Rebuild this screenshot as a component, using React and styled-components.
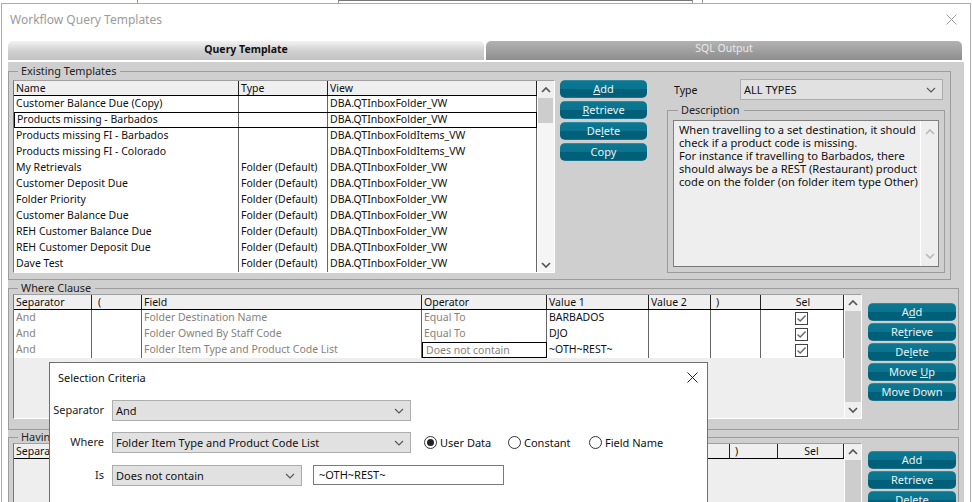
import React from "react";
import styled, { createGlobalStyle } from "styled-components";

const Global = createGlobalStyle`
  html, body { margin: 0; padding: 0; background: #fff; }
  body { font-family: "Noto Sans", "Liberation Sans", sans-serif; font-size: 10.5px; color: #111; }
  * { box-sizing: border-box; }
`;

const Screen = styled.div`
  position: relative;
  width: 972px;
  height: 502px;
  overflow: hidden;
  background: #fff;
`;
const BackStrip = styled.div`
  display: flex;
  height: 3px;
  background: #fff;
`;
const BackPane = styled.div`
  width: ${p => p.$w}px;
  margin-left: ${p => p.$ml || 0}px;
  border-right: ${p => (p.$right ? "1px solid #999" : "none")};
  border-top: ${p => (p.$top ? "1px solid #777" : "none")};
  border-left: ${p => (p.$left ? "1px solid #999" : "none")};
`;
const Win = styled.div`
  margin-left: 1px;
  width: 970px;
  height: 499px;
  border: 1px solid #acacac;
  border-bottom: none;
  padding: 0 0 0 6px;
  overflow: hidden;
`;
const TitleBar = styled.div`
  height: 37px;
  display: flex;
  align-items: center;
  justify-content: space-between;
  padding: 0 13px 7px 2px;
`;
const WinTitle = styled.div`
  font-size: 12px;
  color: #9b9b9b;
`;
const Tabs = styled.div`
  display: flex;
  gap: 2px;
  height: 19px;
`;
const Tab = styled.div`
  width: 476px;
  border-radius: 5px 5px 0 0;
  display: flex;
  align-items: center;
  justify-content: center;
  padding-bottom: ${p => (p.$active ? 4 : 6)}px;
  background: ${p => (p.$active ? "linear-gradient(#f2f2f2, #cfcfcf 55%, #c2c2c2)" : "linear-gradient(#b2b2b2, #a0a0a0 50%, #8d8d8d)")};
  color: ${p => (p.$active ? "#111" : "#e9e9e9")};
  font-weight: ${p => (p.$active ? 700 : 400)};
`;
const Panel = styled.div`
  margin-top: 2px;
  width: 956px;
  height: 441px;
  background: #cfcfcf;
  padding-top: 2px;
  overflow: hidden;
`;
const Group = styled.fieldset`
  margin: 0 0 ${p => p.$mb || 0}px 0;
  padding: ${p => p.$pt}px 0 0 4px;
  width: ${p => p.$w}px;
  height: ${p => p.$h}px;
  border: 1px solid #9c9c9c;
  min-inline-size: 0;
`;
const GroupTitle = styled.legend`
  margin-left: 5px;
  padding: 0 4px 0 3px;
  line-height: 14px;
  font-size: 10.9px;
  color: #222;
`;
const GroupRow = styled.div`
  display: flex;
  align-items: flex-start;
  margin-top: ${p => p.$mt || 0}px;
`;
const GridShell = styled.div`
  display: flex;
  width: ${p => p.$w}px;
  height: ${p => p.$h}px;
  flex: none;
  border-left: 1px solid #777;
  border-top: 1px solid #a0a0a0;
  background: ${p => p.$bg || "#fff"};
  border-bottom: 1px solid #fff;
  border-right: 1px solid #fff;
`;
const GridBody = styled.div`
  flex: 1;
  min-width: 0;
  overflow: hidden;
`;
const GridRow = styled.div`
  display: grid;
  grid-template-columns: ${p => p.$cols};
  height: ${p => p.$h || 16}px;
  background: ${p => (p.$head ? "#efefef" : "#fff")};
  border-bottom: ${p => (p.$head ? "1px solid #000" : "none")};
  position: relative;
`;
const Cell = styled.div`
  border-right: 1px solid ${p => (p.$head ? "#222" : "#666")};
  padding-left: ${p => p.$pl || 2}px;
  line-height: ${p => (p.$head ? 14 : 15)}px;
  white-space: nowrap;
  overflow: hidden;
  color: ${p => (p.$dim ? "#8a8178" : "#111")};
  text-align: ${p => (p.$center ? "center" : "left")};
  display: ${p => (p.$check ? "flex" : "block")};
  justify-content: ${p => (p.$check ? "center" : "normal")};
  padding-right: ${p => (p.$check ? "3px" : "0")};
  align-items: center;
`;
const OutlinedCell = styled(Cell)`
  border: 1px solid #000;
  line-height: 14px;
  padding-left: 3px;
  color: #8a8178;
`;
const SelectedRow = styled.div`
  position: absolute;
  inset: 0 0 0 0;
  border: 1px solid #000;
  pointer-events: none;
`;
const SelectedName = styled(Cell)`
  padding-left: 3px;
`;
const Scroll = styled.div`
  width: ${p => p.$w || 17}px;
  flex: none;
  display: flex;
  flex-direction: column;
  background: ${p => p.$track};
  border-left: 1px solid #fff;
`;
const ScrollBtn = styled.div`
  height: ${p => p.$h || 16}px;
  flex: none;
  display: flex;
  align-items: center;
  justify-content: center;
  background: ${p => p.$bg || "#efefef"};
`;
const Thumb = styled.div`
  height: 25px;
  flex: none;
  background: #cdcdcd;
  margin: 0 1px 0 0;
`;
const ScrollFill = styled.div`
  flex: 1;
`;
const BtnCol = styled.div`
  flex: none;
  display: flex;
  flex-direction: column;
  width: ${p => p.$w}px;
  margin-left: ${p => p.$ml}px;
  margin-top: ${p => p.$mt || 0}px;
  gap: ${p => p.$gap}px;
`;
const Btn = styled.div`
  height: 18px;
  border-radius: 5px;
  background: linear-gradient(#3d93aa 0, #0c7791 1.5px, #0a7490 50%, #005f79 52%, #005f79 92%, #2d7c92 100%);
  color: #e6f2f5;
  font-size: 11px;
  display: flex;
  align-items: center;
  justify-content: center;
  line-height: 15px;
  padding-bottom: 2px;
`;
const RightCol = styled.div`
  flex: none;
  margin-left: 20px;
  margin-top: -1px;
  width: 278px;
`;
const TypeRow = styled.div`
  display: flex;
  align-items: center;
  justify-content: space-between;
  padding: 0 2px 0 7px;
  height: 21px;
  margin-bottom: 3px;
`;
const Select = styled.div`
  display: flex;
  align-items: center;
  justify-content: space-between;
  width: ${p => p.$w}px;
  height: 21px;
  flex: none;
  background: #e1e1e1;
  border: 1px solid #adadad;
  padding: 0 6px 0 3px;
  font-size: 11px;
  color: #111;
`;
const Desc = styled.fieldset`
  margin: 0;
  padding: 3px 5px 0 5px;
  height: 170px;
  border: 1px solid #9c9c9c;
  min-inline-size: 0;
`;
const DescBox = styled.div`
  display: flex;
  height: 147px;
  border: 1px solid #808080;
  border-bottom-color: #777;
  background: #eee;
`;
const DescText = styled.div`
  flex: 1;
  padding: 2px 0 0 5px;
  line-height: 13px;
  font-size: 11.15px;
  color: #111;
`;
const Dialog = styled.div`
  position: absolute;
  left: 49px;
  top: 362px;
  width: 659px;
  height: 150px;
  background: #fff;
  border: 1px solid #6e6e6e;
`;
const DialogHead = styled.div`
  display: flex;
  align-items: center;
  justify-content: space-between;
  height: 30px;
  padding: 0 9px 2px 8px;
  font-size: 11px;
  color: #111;
`;
const DialogForm = styled.div`
  padding-top: 7px;
  display: flex;
  flex-direction: column;
  gap: 11px;
`;
const FormRow = styled.div`
  display: flex;
  align-items: center;
  height: 21px;
  margin-top: ${p => p.$mt || 0}px;
`;
const FormLabel = styled.div`
  width: 54px;
  margin-right: 8px;
  text-align: right;
  font-size: 11px;
  padding-bottom: 2px;
  color: #222;
`;
const RadioSet = styled.div`
  display: flex;
  align-items: center;
  margin-left: 13px;
`;
const RadioItem = styled.div`
  display: flex;
  align-items: center;
  gap: 3px;
  width: ${p => p.$w}px;
  font-size: 11px;
`;
const RadioCircle = styled.div`
  width: 13px;
  height: 13px;
  border: 1px solid #333;
  border-radius: 50%;
  display: flex;
  align-items: center;
  justify-content: center;
  &::after {
    content: "";
    display: ${p => (p.$on ? "block" : "none")};
    width: 7px;
    height: 7px;
    border-radius: 50%;
    background: #222;
  }
`;
const TextInput = styled.div`
  margin-left: 11px;
  margin-top: -1px;
  width: 191px;
  height: 20px;
  border: 1px solid #7a7a7a;
  padding-left: 5px;
  line-height: 17px;
  font-size: 11px;
  color: #111;
`;

const Chevron = ({ c = "#555", sw = 1.1, up = false }) => (
  <svg width={10} height={6} viewBox="0 0 10 6" fill="none">
    <path d={up ? "M1 5 L5 1 L9 5" : "M1 1 L5 5 L9 1"} stroke={c} strokeWidth={sw} />
  </svg>
);
const ScrollChevron = ({ c = "#555", up }) => <Chevron c={c} up={up} sw={1.7} />;
const XIcon = ({ c, s }) => (
  <svg width={s} height={s} viewBox="0 0 11 11" fill="none">
    <path d="M0.5 0.5 L10.5 10.5 M10.5 0.5 L0.5 10.5" stroke={c} strokeWidth="1" />
  </svg>
);
const Check = () => (
  <svg width="13" height="13" viewBox="0 0 13 13" fill="none">
    <rect x="0.5" y="0.5" width="12" height="12" stroke="#444" fill="#fff" />
    <path d="M2.5 6.5 L5.2 9 L10.5 3.5" stroke="#666" strokeWidth="1.4" />
  </svg>
);

const topCols = "225px 89px 1fr";
const whereCols = "78px 50px 280px 125px 102px 62px 50px 1fr";
const havingCols = "78px 50px 280px 125px 102px 81px 48px 1fr";

const templates = [
  ["Customer Balance Due (Copy)", "", "DBA.QTInboxFolder_VW"],
  ["Products missing - Barbados", "", "DBA.QTInboxFolder_VW"],
  ["Products missing FI - Barbados", "", "DBA.QTInboxFoldItems_VW"],
  ["Products missing FI - Colorado", "", "DBA.QTInboxFoldItems_VW"],
  ["My Retrievals", "Folder (Default)", "DBA.QTInboxFolder_VW"],
  ["Customer Deposit Due", "Folder (Default)", "DBA.QTInboxFolder_VW"],
  ["Folder Priority", "Folder (Default)", "DBA.QTInboxFolder_VW"],
  ["Customer Balance Due", "Folder (Default)", "DBA.QTInboxFolder_VW"],
  ["REH Customer Balance Due", "Folder (Default)", "DBA.QTInboxFolder_VW"],
  ["REH Customer Deposit Due", "Folder (Default)", "DBA.QTInboxFolder_VW"],
  ["Dave Test", "Folder (Default)", "DBA.QTInboxFolder_VW"],
];
const clauses = [
  ["And", "Folder Destination Name", "Equal To", "BARBADOS"],
  ["And", "Folder Owned By Staff Code", "Equal To", "DJO"],
  ["And", "Folder Item Type and Product Code List", "Does not contain", "~OTH~REST~"],
];

function ClauseHead({ cols }) {
  return (
    <GridRow $head $h={15} $cols={cols}>
      <Cell $head>Separator</Cell>
      <Cell $head $pl={6}>(</Cell>
      <Cell $head>Field</Cell>
      <Cell $head>Operator</Cell>
      <Cell $head>Value 1</Cell>
      <Cell $head>Value 2</Cell>
      <Cell $head $pl={5}>)</Cell>
      <Cell $head $center>Sel</Cell>
    </GridRow>
  );
}

export default function App() {
  return (
    <Screen>
      <Global />
      <BackStrip>
        <BackPane $w={138} $right />
        <BackPane $w={355} $ml={200} $top $left $right />
        <BackPane $w={10} $right />
      </BackStrip>
      <Win>
        <TitleBar>
          <WinTitle>Workflow Query Templates</WinTitle>
          <XIcon c="#9a9a9a" s={11} />
        </TitleBar>
        <Tabs>
          <Tab $active>Query Template</Tab>
          <Tab>SQL Output</Tab>
        </Tabs>
        <Panel>
          <Group $w={943} $h={216} $mb={1} $pt={2}>
            <GroupTitle>Existing Templates</GroupTitle>
            <GroupRow>
              <GridShell $w={542} $h={193}>
                <GridBody>
                  <GridRow $head $h={15} $cols={topCols}>
                    <Cell $head>Name</Cell>
                    <Cell $head>Type</Cell>
                    <Cell $head>View</Cell>
                  </GridRow>
                  {templates.map((r, i) => (
                    <GridRow key={r[0]} $cols={topCols}>
                      {i === 1 ? <SelectedName>{r[0]}</SelectedName> : <Cell>{r[0]}</Cell>}
                      <Cell>{r[1]}</Cell>
                      <Cell>{r[2]}</Cell>
                      {i === 1 && <SelectedRow />}
                    </GridRow>
                  ))}
                </GridBody>
                <Scroll $track="#f5f5f5">
                  <ScrollBtn $h={17}><ScrollChevron up /></ScrollBtn>
                  <Thumb />
                  <ScrollFill />
                  <ScrollBtn $h={15} $bg="#f5f5f5"><ScrollChevron /></ScrollBtn>
                </Scroll>
              </GridShell>
              <BtnCol $w={87} $ml={5} $gap={3}>
                <Btn><span><u>A</u>dd</span></Btn>
                <Btn><span><u>R</u>etrieve</span></Btn>
                <Btn><span>De<u>l</u>ete</span></Btn>
                <Btn>Copy</Btn>
              </BtnCol>
              <RightCol>
                <TypeRow>
                  <span>Type</span>
                  <Select $w={203}>ALL TYPES<Chevron /></Select>
                </TypeRow>
                <Desc>
                  <GroupTitle>Description</GroupTitle>
                  <DescBox>
                    <DescText>
                      When travelling to a set destination, it should check if a product code is missing.<br />
                      For instance if travelling to Barbados, there should always be a REST (Restaurant) product code on the folder (on folder item type Other)
                    </DescText>
                    <Scroll $track="#eee" $w={18}>
                      <ScrollBtn $h={22} $bg="#eee"><ScrollChevron c="#bbb" up /></ScrollBtn>
                      <ScrollFill />
                      <ScrollBtn $h={20} $bg="#eee"><ScrollChevron c="#bbb" /></ScrollBtn>
                    </Scroll>
                  </DescBox>
                </Desc>
              </RightCol>
            </GroupRow>
          </Group>
          <Group $w={951} $h={149} $pt={0}>
            <GroupTitle>Where Clause</GroupTitle>
            <GroupRow $mt={-1}>
              <GridShell $w={849} $h={125} $bg="#eee">
                <GridBody>
                  <ClauseHead cols={whereCols} />
                  {clauses.map((r, i) => (
                    <GridRow key={r[1]} $cols={whereCols}>
                      <Cell $dim>{r[0]}</Cell>
                      <Cell />
                      <Cell $dim>{r[1]}</Cell>
                      {i === 2 ? <OutlinedCell>{r[2]}</OutlinedCell> : <Cell $dim>{r[2]}</Cell>}
                      <Cell>{r[3]}</Cell>
                      <Cell />
                      <Cell />
                      <Cell $check><Check /></Cell>
                    </GridRow>
                  ))}
                </GridBody>
                <Scroll $track="#cdcdcd">
                  <ScrollBtn $h={16}><ScrollChevron up /></ScrollBtn>
                  <ScrollFill />
                  <ScrollBtn $h={16} $bg="#efefef"><ScrollChevron /></ScrollBtn>
                </Scroll>
              </GridShell>
              <BtnCol $w={88} $ml={6} $mt={9} $gap={2}>
                <Btn><span>A<u>d</u>d</span></Btn>
                <Btn><span>Re<u>t</u>rieve</span></Btn>
                <Btn><span>De<u>l</u>ete</span></Btn>
                <Btn><span>Move <u>U</u>p</span></Btn>
                <Btn>Move Down</Btn>
              </BtnCol>
            </GroupRow>
          </Group>
          <Group $w={951} $h={120} $pt={0}>
            <GroupTitle>Having Clause</GroupTitle>
            <GroupRow $mt={-1}>
              <GridShell $w={849} $h={125} $bg="#eee">
                <GridBody>
                  <ClauseHead cols={havingCols} />
                </GridBody>
                <Scroll $track="#cdcdcd">
                  <ScrollBtn $h={16}><ScrollChevron up /></ScrollBtn>
                  <ScrollFill />
                </Scroll>
              </GridShell>
              <BtnCol $w={88} $ml={6} $mt={8} $gap={2}>
                <Btn>Add</Btn>
                <Btn>Retrieve</Btn>
                <Btn>Delete</Btn>
              </BtnCol>
            </GroupRow>
          </Group>
        </Panel>
      </Win>
      <Dialog>
        <DialogHead>
          <span>Selection Criteria</span>
          <XIcon c="#222" s={11} />
        </DialogHead>
        <DialogForm>
          <FormRow>
            <FormLabel>Separator</FormLabel>
            <Select $w={299}>And<Chevron /></Select>
          </FormRow>
          <FormRow>
            <FormLabel>Where</FormLabel>
            <Select $w={299}>Folder Item Type and Product Code List<Chevron /></Select>
            <RadioSet>
              <RadioItem $w={84}><RadioCircle $on />User Data</RadioItem>
              <RadioItem $w={81}><RadioCircle />Constant</RadioItem>
              <RadioItem $w={80}><RadioCircle />Field Name</RadioItem>
            </RadioSet>
          </FormRow>
          <FormRow $mt={1}>
            <FormLabel>Is</FormLabel>
            <Select $w={190}>Does not contain<Chevron /></Select>
            <TextInput>~OTH~REST~</TextInput>
          </FormRow>
        </DialogForm>
      </Dialog>
    </Screen>
  );
}
